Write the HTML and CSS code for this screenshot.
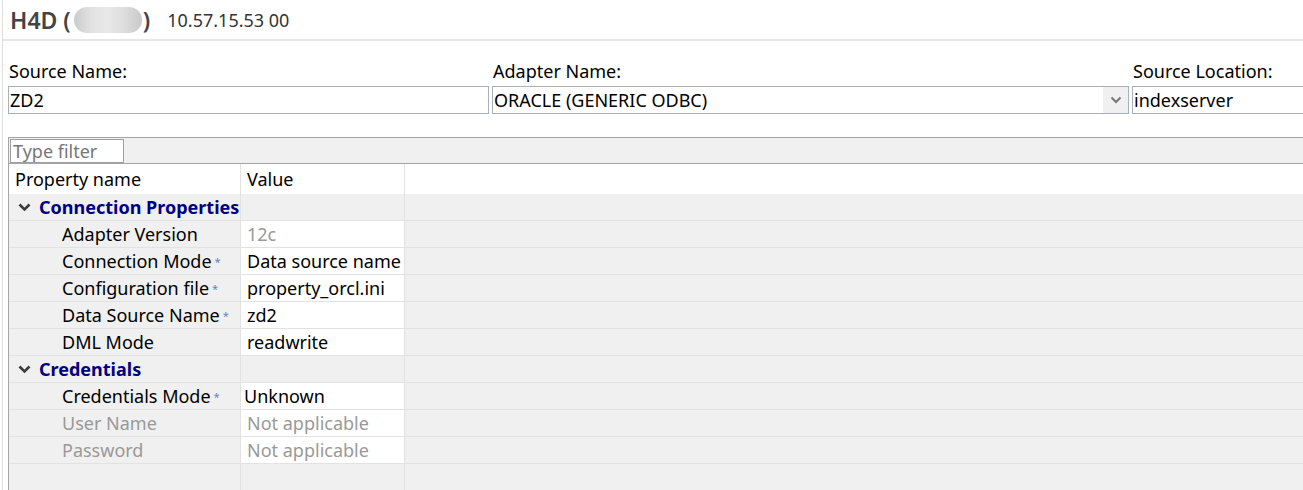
FILE: index.html
```html
<!DOCTYPE html>
<html lang="en">
<head>
    <meta charset="UTF-8">
    <title>Source Properties</title>
    <link rel="stylesheet" href="styles.css">
</head>
<body>
    <div class="page">
        <div class="title-bar">
            <span class="title">H4D (<span class="blur"></span>)</span>
            <span class="host">10.57.15.53 00</span>
        </div>

        <div class="fields">
            <div class="field">
                <label>Source Name:</label>
                <div class="input">ZD2</div>
            </div>
            <div class="field">
                <label>Adapter Name:</label>
                <div class="input combo">
                    <span>ORACLE (GENERIC ODBC)</span>
                    <span class="drop">
                        <svg width="12" height="8" viewBox="0 0 12 8"><path d="M1.5 1.5 L6 6 L10.5 1.5" fill="none" stroke="#777" stroke-width="2"/></svg>
                    </span>
                </div>
            </div>
            <div class="field">
                <label>Source Location:</label>
                <div class="input open">indexserver</div>
            </div>
        </div>

        <div class="props">
            <div class="filter-bar">
                <div class="filter">Type filter</div>
            </div>

            <div class="row head">
                <div class="cell">Property name</div>
                <div class="cell">Value</div>
                <div class="cell"></div>
            </div>

            <div class="row group">
                <div class="cell">
                    <svg class="chev" width="13" height="9" viewBox="0 0 13 9"><path d="M1.5 1.5 L6.5 6.5 L11.5 1.5" fill="none" stroke="#3c3c3c" stroke-width="2.6"/></svg>
                    Connection Properties
                </div>
                <div class="cell"></div>
                <div class="cell"></div>
            </div>
            <div class="row">
                <div class="cell name">Adapter Version</div>
                <div class="cell value muted">12c</div>
                <div class="cell"></div>
            </div>
            <div class="row">
                <div class="cell name">Connection Mode<span class="req">*</span></div>
                <div class="cell value">Data source name</div>
                <div class="cell"></div>
            </div>
            <div class="row">
                <div class="cell name">Configuration file<span class="req">*</span></div>
                <div class="cell value">property_orcl.ini</div>
                <div class="cell"></div>
            </div>
            <div class="row">
                <div class="cell name">Data Source Name<span class="req">*</span></div>
                <div class="cell value">zd2</div>
                <div class="cell"></div>
            </div>
            <div class="row">
                <div class="cell name">DML Mode</div>
                <div class="cell value">readwrite</div>
                <div class="cell"></div>
            </div>

            <div class="row group">
                <div class="cell">
                    <svg class="chev" width="13" height="9" viewBox="0 0 13 9"><path d="M1.5 1.5 L6.5 6.5 L11.5 1.5" fill="none" stroke="#3c3c3c" stroke-width="2.6"/></svg>
                    Credentials
                </div>
                <div class="cell"></div>
                <div class="cell"></div>
            </div>
            <div class="row">
                <div class="cell name">Credentials Mode<span class="req">*</span></div>
                <div class="cell value editor">Unknown</div>
                <div class="cell"></div>
            </div>
            <div class="row">
                <div class="cell name muted">User Name</div>
                <div class="cell value muted">Not applicable</div>
                <div class="cell"></div>
            </div>
            <div class="row">
                <div class="cell name muted">Password</div>
                <div class="cell value muted">Not applicable</div>
                <div class="cell"></div>
            </div>
            <div class="row empty">
                <div class="cell"></div>
                <div class="cell"></div>
                <div class="cell"></div>
            </div>
        </div>
    </div>
</body>
</html>
```

FILE: styles.css
```css
* {
    box-sizing: border-box;
    margin: 0;
    padding: 0;
}

body {
    font-family: "Noto Sans", "Noto Sans CJK SC", sans-serif;
    font-size: 18px;
    color: #000;
    background: #fff;
    overflow: hidden;
    height: 490px;
}

.page {
    height: 490px;
    margin-left: 2px;
    border-left: 1px solid #dedede;
    overflow: hidden;
}

.title-bar {
    height: 41px;
    display: flex;
    align-items: center;
    padding-left: 7px;
    border-bottom: 2px solid #e6e6e6;
}

.title {
    font-size: 23px;
    font-weight: 600;
    color: #444;
    display: flex;
    align-items: center;
}

.blur {
    display: inline-block;
    width: 68px;
    height: 26px;
    margin: 0 1px 0 3px;
    border-radius: 13px;
    background: linear-gradient(90deg, #cbcbcb 0%, #e2e2e2 25%, #e8e8e8 50%, #dcdcdc 75%, #c9c9c9 100%);
}

.host {
    margin-left: 17px;
    font-size: 18px;
    color: #333;
}

.fields {
    display: grid;
    grid-template-columns: 481px 637px 1fr;
    column-gap: 3px;
    padding: 18px 0 0 5px;
}

.field label {
    display: block;
    line-height: 24px;
    padding-left: 1px;
}

.input {
    height: 28px;
    margin-top: 3px;
    border: 1px solid #a8b0bb;
    padding-left: 1px;
    line-height: 26px;
    background: #fff;
    white-space: nowrap;
}

.input.open {
    border-right: none;
}

.combo {
    display: flex;
    justify-content: space-between;
}

.drop {
    width: 25px;
    background: #f0f0f0;
    display: flex;
    align-items: center;
    justify-content: center;
}

.props {
    margin: 23px 0 0 5px;
    border-top: 1px solid #a5a5a5;
    border-left: 1px solid #a5a5a5;
}

.filter-bar {
    height: 26px;
    background: #f0f0f0;
    border-bottom: 1px solid #a5a5a5;
    padding: 1px 0 0 1px;
}

.filter {
    width: 114px;
    height: 24px;
    background: #fff;
    border: 1px solid #a0a0a0;
    color: #777;
    line-height: 22px;
    padding-left: 2px;
}

.row {
    display: grid;
    grid-template-columns: 232px 164px 1fr;
    height: 27px;
    background: #f0f0f0;
}

.cell {
    border-right: 1px solid #e2e2e2;
    border-bottom: 1px solid #e2e2e2;
    line-height: 26px;
    white-space: nowrap;
    overflow: hidden;
}

.cell:last-child {
    border-right: none;
}

.row.head {
    height: 30px;
    background: #fff;
}

.row.head .cell {
    line-height: 30px;
    padding-left: 6px;
    border-bottom: none;
}

.row.group .cell:first-child {
    font-weight: 700;
    color: #000080;
    display: flex;
    align-items: center;
    padding-left: 9px;
}

.chev {
    margin-right: 8px;
}

.name {
    padding-left: 53px;
}

.value {
    background: #fff;
    padding-left: 6px;
}

.value.editor {
    padding-left: 3px;
}

.muted {
    color: #999;
}

.req {
    color: #5b87c6;
    font-size: 11px;
    margin-left: 3px;
    vertical-align: 2px;
}

.row.empty {
    height: 40px;
}
```
